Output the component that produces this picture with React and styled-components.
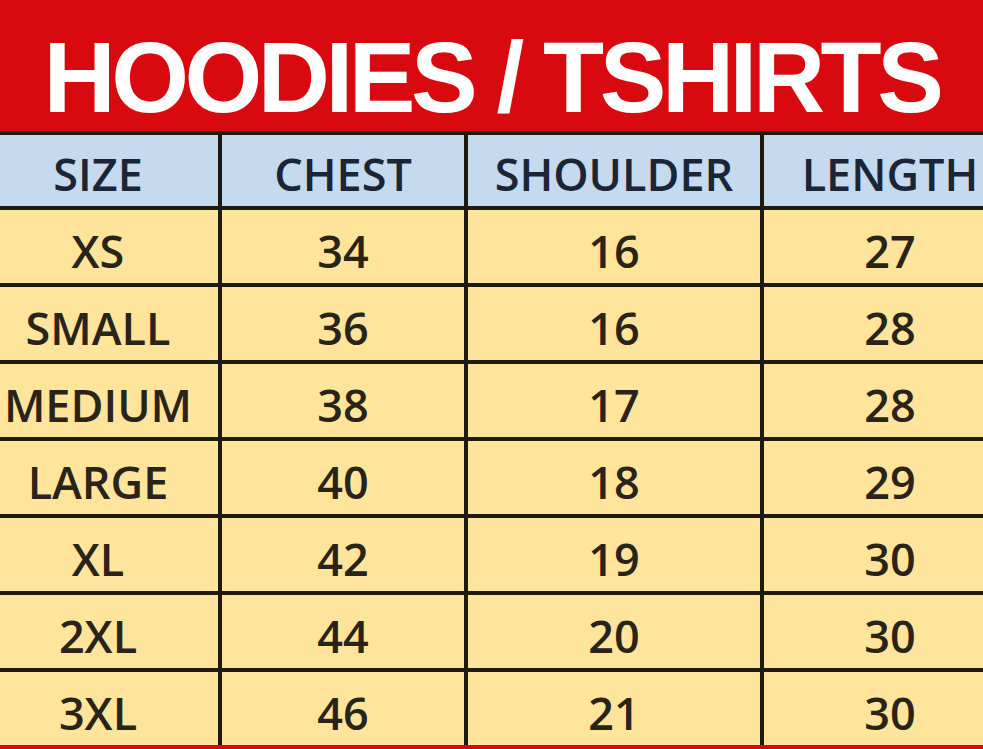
import styled, { createGlobalStyle } from "styled-components";

const GlobalStyle = createGlobalStyle`
  html, body {
    margin: 0;
    padding: 0;
    background: #d8090f;
    overflow: hidden;
  }
  * {
    box-sizing: border-box;
  }
`;

const sizes = [
  ["XS", 34, 16, 27],
  ["SMALL", 36, 16, 28],
  ["MEDIUM", 38, 17, 28],
  ["LARGE", 40, 18, 29],
  ["XL", 42, 19, 30],
  ["2XL", 44, 20, 30],
  ["3XL", 46, 21, 30],
];

const headings = ["SIZE", "CHEST", "SHOULDER", "LENGTH"];

const Page = styled.div`
  width: 983px;
  height: 749px;
  overflow: hidden;
  background: #d8090f;
  display: flex;
  flex-direction: column;
`;

const Banner = styled.h1`
  margin: 0;
  height: 131px;
  padding-top: 27px;
  background: #d8090f;
  color: #fff;
  font-family: "Liberation Sans", Arial, sans-serif;
  font-weight: 700;
  font-size: 100px;
  line-height: 100px;
  letter-spacing: -4.5px;
  text-align: center;
  white-space: nowrap;
`;

const Table = styled.div`
  display: grid;
  grid-template-columns: 240px 242px 292px 252px;
  grid-template-rows: 71px repeat(7, 73px);
  gap: 4px;
  margin-left: -22px;
  width: 1040px;
  background: #1e1a12;
  border-top: 4px solid #1e1a12;
  border-bottom: 4px solid #d8090f;
`;

const Cell = styled.div`
  display: flex;
  align-items: center;
  justify-content: center;
  padding-top: ${(p) => (p.$head ? "6px" : "8px")};
  background: ${(p) => (p.$head ? "#c5d9ef" : "#ffe49c")};
  color: ${(p) => (p.$head ? "#1b2535" : "#2a2418")};
  font-family: "Open Sans", "Noto Sans", sans-serif;
  font-weight: 600;
  font-size: 45px;
  line-height: 1;
  white-space: nowrap;
`;

export default function App() {
  return (
    <Page>
      <GlobalStyle />
      <Banner>HOODIES / TSHIRTS</Banner>
      <Table>
        {headings.map((h) => (
          <Cell key={h} $head>
            {h}
          </Cell>
        ))}
        {sizes.map((row) =>
          row.map((v, i) => <Cell key={row[0] + i}>{v}</Cell>)
        )}
      </Table>
    </Page>
  );
}
